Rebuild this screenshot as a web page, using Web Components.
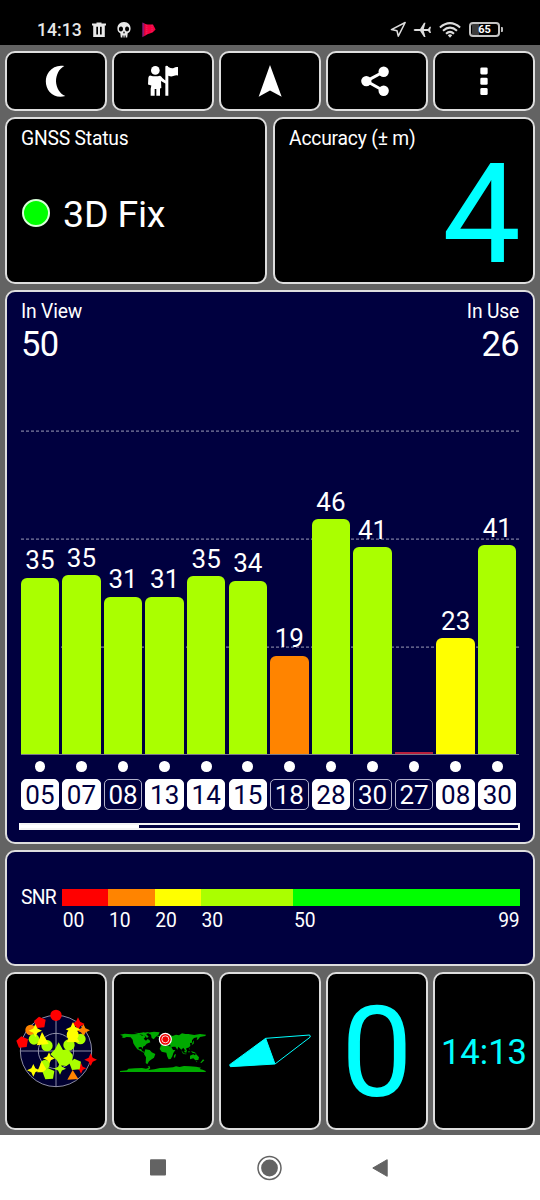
<!DOCTYPE html>
<html lang="en">
<head>
<meta charset="utf-8">
<title>GNSS Status</title>
<style>
  body {
    margin: 0;
    background: #636363;
    color: #fff;
    font-family: Roboto, "Liberation Sans", sans-serif;
  }
</style>
</head>
<body>
<gps-app></gps-app>

<script>
const ICONS = {
  moon: { box: '120 195.75 96 96', size: 32, body: `
    <path fill="#fff" d="M193 199C175 195 158 202 147 216C133 234 135 260 149 277C160 290 178 294 196 289C179 281 169 264 168 245C168 226 177 207 193 199Z"/>` },
  guide: { box: '423 177.75 132 132', size: 44, body: `
    <g fill="#fff"><circle cx="466" cy="212" r="13"/>
    <path d="M450 227Q466 232 480 228Q485 230 487 235L496 242V201Q496 198 500 198Q504 198 505 202Q515 207 521 205Q528 200 534 202V227Q528 225 520 229Q513 232 505 228V288H496V251L483 244L484 265L480 266V288H469V268H464V288H452V267L454 257L444 254L445 234Q446 228 450 227Z"/></g>` },
  arrow: { box: '762 195.75 96 96', size: 32, body: `
    <path fill="#fff" d="M810 196L845 291L810 272L776 291Z"/>` },
  share: { box: '272 195.75 96 96', size: 32, body: `
    <path d="M340 216L288 244L340 273" fill="none" stroke="#fff" stroke-width="9"/>
    <g fill="#fff"><circle cx="340" cy="216" r="15.5"/><circle cx="288" cy="244" r="15.5"/><circle cx="340" cy="273" r="15.5"/></g>` },
  more: { box: '594 195.75 96 96', size: 32, body: `
    <g fill="#fff"><rect x="631" y="203" width="22" height="21" rx="4"/><rect x="631" y="234" width="22" height="21" rx="4"/><rect x="631" y="265" width="22" height="21" rx="4"/></g>` }
};

const SATELLITES = [
  { id: '05', snr: 35, height: 177, used: true },
  { id: '07', snr: 35, height: 179.5, used: true },
  { id: '08', snr: 31, height: 158.3 },
  { id: '13', snr: 31, height: 158.3, used: true },
  { id: '14', snr: 35, height: 178.5, used: true },
  { id: '15', snr: 34, height: 174, used: true },
  { id: '18', snr: 19, height: 99 },
  { id: '28', snr: 46, height: 235.5, used: true },
  { id: '30', snr: 41, height: 207.5 },
  { id: '27', snr: 0, height: 3 },
  { id: '08', snr: 23, height: 116.5, used: true },
  { id: '30', snr: 41, height: 209.5, used: true }
];

function snrColor(snr) {
  if (snr < 10) return '#b8203c';
  if (snr < 20) return '#ff8400';
  if (snr < 30) return '#ffff00';
  if (snr < 50) return '#aaff00';
  return '#00ff00';
}

class StatusBar extends HTMLElement {
  constructor() {
    super();
    this.attachShadow({ mode: 'open' }).innerHTML = `
      <style>
        :host {
          display: flex;
          justify-content: space-between;
          box-sizing: border-box;
          height: 45px;
          padding: 19px 37px 0 37px;
          background: #000;
          color: #e8e8e8;
        }
        .side { display: flex; align-items: center; height: 21px; }
        .time { font-size: 17.6px; font-weight: 500; line-height: 22px; width: 54.5px; }
        svg { display: block; }
        .skull, .flag { margin-left: 11px; }
        .plane { margin-left: 6px; }
        .wifi { margin-left: 7px; }
        .battery {
          box-sizing: border-box;
          width: 31px; height: 15px;
          margin-left: 8px;
          border: 2px solid #c4c4c4;
          border-radius: 4px;
          color: #fff;
          font-size: 11px; font-weight: 700; line-height: 12px;
          text-align: center;
          background: linear-gradient(90deg, #000 1px, #3c3c3c 1px 8px, #000 8px);
        }
        .tip { width: 2px; height: 5px; margin-left: 1px; background: #bbb; border-radius: 0 1px 1px 0; }
      </style>
      <div class="side">
        <span class="time">14:13</span>
        <svg width="14" height="16" viewBox="0 0 14 16"><path fill="#e8e8e8" fill-rule="evenodd" d="M4.5 .5H9.5V1.6H14V3.6H12.8V15H1.2V3.6H0V1.6H4.5ZM4.3 4.8V12.6H6V4.8ZM8 4.8V12.6H9.7V4.8Z"/></svg>
        <svg class="skull" width="14" height="16" viewBox="0 0 14 16"><path fill="#e8e8e8" fill-rule="evenodd" d="M7 0C2.6 0 .4 3 .4 6.5C.4 9 1.5 10.7 3.3 11.2L3.8 15.4H5.4V13.5H6.5V15.4H7.6V13.5H8.7V15.4H10.2L10.7 11.2C12.6 10.6 13.6 8.8 13.6 6.5C13.6 3 11.4 0 7 0ZM4 4.4C5.4 4.4 6 5.5 6 7C6 8.6 5.2 9.4 3.8 9.4C2.5 9.4 1.9 8.4 1.9 7.1C1.9 5.5 2.7 4.4 4 4.4ZM10 4.4C11.4 4.4 12.1 5.5 12.1 7.1C12.1 8.4 11.4 9.4 10.2 9.4C8.9 9.4 8.1 8.6 8.1 7C8.1 5.5 8.7 4.4 10 4.4ZM7 9L8 11.3H6Z"/></svg>
        <svg class="flag" width="14" height="16" viewBox="0 0 14 16"><path fill="#8c1a78" d="M.3 .6L2.4 1.2V14L.3 15.2Z"/><path fill="#f80040" d="M2.2 1.5L5 2.6H11L13.6 7.4L10.5 10.6L5.5 12.2L2.2 14.2Z"/><path stroke="#d83a78" stroke-dasharray="1 1" d="M4.8 2.8V12M10 2.8V10.8"/></svg>
      </div>
      <div class="side">
        <svg width="17" height="17" viewBox="0 0 17 17"><path fill="none" stroke="#ddd" stroke-width="1.5" stroke-linejoin="round" d="M1.4 8.6L15.2 1.5L8.3 15.2L7 9.8Z"/></svg>
        <svg class="plane" width="19" height="16" viewBox="0 0 19 16"><path fill="#ddd" d="M.6 8Q.7 7 2.5 6.9H7.1L11 .8H12.5L10.8 6.9H15L16.7 4.8H18L17.2 8L18 11.1H16.7L15 9H10.8L12.5 15.1H11L7.1 9H2.5Q.7 8.9 .6 8Z"/></svg>
        <svg class="wifi" width="22" height="16" viewBox="0 0 22 16"><g fill="none" stroke="#ddd" stroke-width="2"><path d="M.9 5.5Q11-3.2 21.1 5.5M4 8.8Q11 2.5 18 8.8M7 11.8Q11 8 15 11.8"/></g><path fill="#ddd" d="M8.8 13.2Q11 11.5 13.2 13.2L11 15.7Z"/></svg>
        <span class="battery">65</span><span class="tip"></span>
      </div>`;
  }
}
customElements.define('status-bar', StatusBar);

class GpsCard extends HTMLElement {
  constructor() {
    super();
    this.attachShadow({ mode: 'open' }).innerHTML = `
      <style>
        :host {
          display: flex;
          flex-direction: column;
          box-sizing: border-box;
          min-width: 0;
          border: 2px solid #dedede;
          border-radius: 10px;
          background: #000;
          padding: 9.7px 14px 0;
        }
        :host([blue]) { background: #00003f; }
        :host([center]) { align-items: center; justify-content: center; padding: 0; }
      </style>
      <slot></slot>`;
  }
}
customElements.define('gps-card', GpsCard);

class GpsIcon extends HTMLElement {
  constructor() {
    super();
    this.attachShadow({ mode: 'open' });
  }

  connectedCallback() {
    const icon = ICONS[this.getAttribute('name')];
    this.shadowRoot.innerHTML = `
      <style>:host, svg { display: block; }</style>
      <svg width="${icon.size}" height="${icon.size}" viewBox="${icon.box}">${icon.body}</svg>`;
  }
}
customElements.define('gps-icon', GpsIcon);

class SnrChart extends HTMLElement {
  constructor() {
    super();
    this.attachShadow({ mode: 'open' });
  }

  connectedCallback() {
    this.shadowRoot.innerHTML = `
      <style>
        :host { display: block; }
        .plot {
          position: relative;
          box-sizing: border-box;
          height: 394px;
          border-bottom: 1px solid #77778a;
        }
        .lines { position: absolute; inset: 0; }
        .cols {
          display: grid;
          grid-template-columns: repeat(12, 38.4px);
          column-gap: 3.2px;
          margin-left: -0.3px;
        }
        .plot .cols { position: relative; height: 393px; align-items: end; }
        .col { text-align: center; font-size: 26px; line-height: 26px; }
        .bar { border-radius: 6px 6px 0 0; margin-top: 4.5px; }
        .dots { padding-top: 6px; justify-items: center; }
        .dot { width: 10.6px; height: 11px; border-radius: 50%; background: #fff; }
        .ids { padding-top: 6.4px; }
        .id {
          box-sizing: border-box;
          height: 31px;
          border: 1px solid #b4b4cc;
          border-radius: 5px;
          font-size: 26px;
          line-height: 30px;
          text-align: center;
        }
        .used { background: #fff; border-color: #fff; color: #00003f; }
        .scroll {
          box-sizing: border-box;
          width: 501px; height: 7px;
          margin: 13.2px 0 0 -1.6px;
          border: 2px solid #f4f4f4;
          border-left-color: #fff;
        }
        .thumb { width: 118px; height: 100%; background: #fff; }
      </style>
      <div class="plot">
        <svg class="lines" width="498" height="394">
          <path d="M0 70.1H498M0 178.1H498M0 286.1H498" stroke="#9c9cb8" stroke-dasharray="3 2" fill="none"/>
        </svg>
        <div class="cols">
          ${SATELLITES.map(s => `<div class="col">${s.snr || ''}<div class="bar" style="height:${s.height - 0.5}px;background:${snrColor(s.snr)};${s.snr ? '' : 'border-radius:0'}"></div></div>`).join('')}
        </div>
      </div>
      <div class="cols dots">${SATELLITES.map(() => '<div class="dot"></div>').join('')}</div>
      <div class="cols ids">${SATELLITES.map(s => `<div class="id ${s.used ? 'used' : ''}">${s.id}</div>`).join('')}</div>
      <div class="scroll"><div class="thumb"></div></div>`;
  }
}
customElements.define('snr-chart', SnrChart);

class SnrLegend extends HTMLElement {
  constructor() {
    super();
    this.attachShadow({ mode: 'open' }).innerHTML = `
      <style>
        :host { display: flex; font-size: 19.3px; line-height: 19.3px; margin: 27.3px -1px 0 0; }
        .name { width: 41px; margin-top: -1px; letter-spacing: -0.7px; }
        .scale {
          flex: 1;
          display: grid;
          grid-template-columns: 10fr 10fr 10fr 20fr 49fr;
          grid-template-rows: 17.5px auto;
          row-gap: 5px;
        }
        .scale span { padding-left: 0.8px; letter-spacing: -0.2px; }
        .values { display: flex; justify-content: space-between; padding-right: 0.6px; }
      </style>
      <span class="name">SNR</span>
      <div class="scale">
        <i style="background:#f00"></i><i style="background:#ff8400"></i><i style="background:#ff0"></i><i style="background:#af0"></i><i style="background:#0f0"></i>
        <span>00</span><span>10</span><span>20</span><span>30</span>
        <div class="values"><span>50</span><span>99</span></div>
      </div>`;
  }
}
customElements.define('snr-legend', SnrLegend);

class SkyRadar extends HTMLElement {
  constructor() {
    super();
    const star = (x, y, c, r = 18) => `<path fill="${c}" d="M${x} ${y - r}L${x + r * .32} ${y - r * .32}L${x + r} ${y}L${x + r * .32} ${y + r * .32}L${x} ${y + r}L${x - r * .32} ${y + r * .32}L${x - r} ${y}L${x - r * .32} ${y - r * .32}Z"/>`;
    const dot = (x, y, c, r = 16) => `<circle cx="${x}" cy="${y}" r="${r}" fill="${c}"/>`;
    const pent = (x, y, c) => `<path fill="${c}" d="M${x - 3} ${y - 18}L${x + 17} ${y - 9}L${x + 13} ${y + 14}L${x - 10} ${y + 16}L${x - 18} ${y - 5}Z"/>`;
    this.attachShadow({ mode: 'open' }).innerHTML = `
      <style>:host, svg { display: block; }</style>
      <svg width="98" height="98" viewBox="-9 6 294 294">
        <circle cx="138" cy="153" r="107" fill="#000030"/>
        <g fill="none" stroke="#a8a8bd" stroke-width="2.5"><circle cx="138" cy="153" r="107"/><circle cx="138" cy="153" r="53"/><path d="M31 153H245M138 46V260"/></g>
        ${dot(138, 46, '#f00', 17)}${pent(90, 68, '#f00')}${pent(37, 127, '#f00')}
        ${dot(62, 90, '#ff8400')}${dot(72, 118, '#af0')}${star(76, 92, '#ff0', 20)}
        ${dot(111, 137, '#af0', 17)}<path fill="#ff0" d="M96 96L116 132L80 136Z"/>
        ${star(220, 91, '#ff8400', 20)}${star(204, 72, '#f00', 20)}${dot(211, 117, '#af0')}${dot(177, 135, '#af0', 17)}
        ${star(189, 88, '#ff0', 22)}${dot(188, 104, '#ff0', 18)}<path fill="#ff0" d="M170 126L188 92L209 127Z"/>
        <path fill="#af0" d="M146 127L159 150L173 147L188 164L187 185L169 198L149 196L140 180L121 163L135 148Z"/>
        ${star(117, 175, '#ff0')}${dot(105, 194, '#af0', 14)}<path fill="#ff0" d="M95 184L114 217L81 217Z"/>
        ${pent(116, 222, '#af0')}${star(70, 211, '#ff0', 19)}${star(150, 206, '#af0', 18)}
        ${star(213, 205, '#f00', 16)}${pent(196, 194, '#af0')}${star(242, 179, '#f00', 19)}
        <path fill="#ff8400" d="M188 210L205 237L172 239Z"/>
      </svg>`;
  }
}
customElements.define('sky-radar', SkyRadar);

class WorldMap extends HTMLElement {
  constructor() {
    super();
    this.attachShadow({ mode: 'open' }).innerHTML = `
      <style>:host, svg { display: block; }</style>
      <svg width="98" height="98" viewBox="12 -24 294 294">
        <g fill="#00aa00">
          <path d="M30 74L44 71L65 73L88 72L96 77L103 74L106 82L101 86L108 92L113 87L119 91L121 97L110 101L105 107L99 110L99 117L94 111L86 112L86 118L93 117L97 124L104 126L101 128L92 123L82 118L75 108L70 100L68 89L62 82L50 81L42 84L35 82L39 78Z"/>
          <path d="M72 68L88 69L102 67L109 73L116 80L111 84L103 76L88 73Z"/>
          <path d="M96 69L116 66L112 71L102 73ZM112 68L132 65L149 67L145 75L137 81L131 88L125 84L123 74Z"/>
          <path d="M106 118L119 120L125 127L136 132L132 143L125 148L117 154L112 163L107 159L108 142L102 132Z"/>
          <path d="M142 78L150 77L150 81L143 81ZM151 88L156 83L159 93L152 96ZM160 84L167 75L178 73L187 78L198 74L207 76L216 70L226 72L235 72L253 75L270 72L288 74L286 78L270 81L265 88L260 91L262 82L252 84L246 91L246 98L240 99L241 108L235 113L229 114L229 121L224 119L220 113L214 119L211 116L205 110L202 119L196 110L190 110L183 111L180 104L175 107L171 101L166 101L160 105L151 104L153 98L160 95Z"/>
          <path d="M153 106L166 103L173 108L183 109L189 120L196 120L190 129L187 139L182 147L176 148L172 140L169 128L155 125L149 117ZM193 134L198 132L195 143L191 142Z"/>
          <path d="M240 137L250 133L254 136L258 132L267 142L265 150L256 151L250 145L240 148ZM214 121L221 129L217 128ZM223 122L231 119L229 128L223 126ZM235 123L239 123L237 130ZM243 123L254 127L260 131L247 128ZM218 130L230 131L229 133L219 132ZM248 97L252 91L251 101L245 105ZM237 112L240 116L240 121ZM259 153L262 155L259 157ZM279 148L283 151L274 159L271 158Z"/>
          <path d="M30 183L51 181L55 176L75 175L96 174L108 176L117 173L113 170L118 167L121 175L115 180L133 178L150 174L172 173L189 172L198 169L209 171L222 168L239 169L258 170L273 173L269 177L278 179L287 183V186H30Z"/>
        </g>
        <circle cx="166" cy="88" r="18" fill="#e00"/>
        <g fill="none" stroke="#fff"><circle cx="166" cy="88" r="18" stroke-width="3.5"/><circle cx="166" cy="88" r="10.5" stroke-width="2.5"/></g>
      </svg>`;
  }
}
customElements.define('world-map', WorldMap);

class CompassNeedle extends HTMLElement {
  constructor() {
    super();
    this.attachShadow({ mode: 'open' }).innerHTML = `
      <style>:host, svg { display: block; }</style>
      <svg width="98" height="98" viewBox="18 96 294 294">
        <path fill="#0ff" stroke="#0ff" stroke-width="3" stroke-linejoin="round" d="M152 205L180 282L46 290L44 284Z"/>
        <path fill="none" stroke="#0ff" stroke-width="3" stroke-linejoin="round" d="M152 205L284 195L286 201L180 282"/>
      </svg>`;
  }
}
customElements.define('compass-needle', CompassNeedle);

class NavBar extends HTMLElement {
  constructor() {
    super();
    this.attachShadow({ mode: 'open' }).innerHTML = `
      <style>
        :host {
          display: flex;
          align-items: center;
          justify-content: space-between;
          box-sizing: border-box;
          height: 65px;
          padding: 0 152px 0 150px;
          background: #fff;
        }
        svg { display: block; }
      </style>
      <svg width="16" height="17"><rect y=".3" width="16" height="16.3" rx="1" fill="#636363"/></svg>
      <svg width="26" height="26"><circle cx="13.5" cy="13" r="11.5" fill="none" stroke="#636363" stroke-width="1.5"/><circle cx="13.5" cy="13" r="8.4" fill="#636363"/></svg>
      <svg width="16" height="20"><path d="M.8 10L15.2 1.7V18.3Z" fill="#636363" stroke="#636363" stroke-linejoin="round"/></svg>`;
  }
}
customElements.define('nav-bar', NavBar);

class GpsApp extends HTMLElement {
  constructor() {
    super();
    this.attachShadow({ mode: 'open' }).innerHTML = `
      <style>
        :host { display: flex; flex-direction: column; height: 1200px; overflow: hidden; }
        main {
          flex: 1;
          display: grid;
          grid-template-rows: 60px 167px 554px 116px 158px;
          row-gap: 6px;
          padding: 6px 5px 0;
          box-sizing: border-box;
        }
        .five, .two { display: grid; column-gap: 5px; min-height: 0; }
        .five { grid-template-columns: repeat(5, 1fr); }
        .two { grid-template-columns: 1fr 1fr; column-gap: 6px; }
        .label { font-size: 19.3px; line-height: 19.3px; letter-spacing: -0.2px; }
        .fix { display: flex; align-items: center; font-size: 37.5px; line-height: 37.5px; margin-top: 48px; letter-spacing: -0.2px; }
        .led {
          box-sizing: border-box;
          width: 28px; height: 28px;
          margin: -3px 13px 0 1px;
          border: 2px solid #d8ffd8;
          border-radius: 50%;
          background: #0f0;
        }
        .accuracy { font-size: 140px; line-height: 110px; margin: 11.3px -2px 0 0; text-align: right; color: #0ff; }
        .head { display: flex; justify-content: space-between; height: 59.7px; }
        .count { font-size: 34.5px; line-height: 34.5px; margin-top: 6.2px; letter-spacing: -0.6px; }
        .right { text-align: right; }
        .speed { font-size: 127px; line-height: 127px; padding-top: 2px; color: #0ff; }
        .clock { font-size: 34.6px; line-height: 35px; padding-top: 2px; color: #0ff; }
      </style>
      <status-bar></status-bar>
      <main>
        <div class="five">
          ${['moon', 'guide', 'arrow', 'share', 'more'].map(name => `<gps-card center><gps-icon name="${name}"></gps-icon></gps-card>`).join('')}
        </div>
        <div class="two">
          <gps-card>
            <div class="label">GNSS Status</div>
            <div class="fix"><span class="led"></span>3D Fix</div>
          </gps-card>
          <gps-card>
            <div class="label">Accuracy (± m)</div>
            <div class="accuracy">4</div>
          </gps-card>
        </div>
        <gps-card blue>
          <div class="head">
            <div><div class="label">In View</div><div class="count">50</div></div>
            <div class="right"><div class="label">In Use</div><div class="count">26</div></div>
          </div>
          <snr-chart></snr-chart>
        </gps-card>
        <gps-card blue><snr-legend></snr-legend></gps-card>
        <div class="five">
          <gps-card center><sky-radar></sky-radar></gps-card>
          <gps-card center><world-map></world-map></gps-card>
          <gps-card center><compass-needle></compass-needle></gps-card>
          <gps-card center><span class="speed">0</span></gps-card>
          <gps-card center><span class="clock">14:13</span></gps-card>
        </div>
      </main>
      <nav-bar></nav-bar>`;
  }
}
customElements.define('gps-app', GpsApp);
</script>
</body>
</html>
